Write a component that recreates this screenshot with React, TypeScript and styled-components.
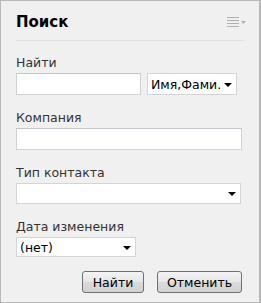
import React from "react";
import styled, { createGlobalStyle } from "styled-components";

const Global = createGlobalStyle`
  html, body { margin: 0; padding: 0; background: #ffffff; }
  * { box-sizing: border-box; }
`;

const Panel = styled.div`
  width: 261px;
  height: 303px;
  background: #f0f0f0;
  border: 1px solid #b8b8b8;
  border-right-width: 2px;
  padding: 0 15px 0 15px;
  display: flex;
  flex-direction: column;
  font-family: "DejaVu Sans", Verdana, sans-serif;
  font-size: 12px;
  color: #222;
`;

const Header = styled.div`
  height: 40px;
  display: flex;
  align-items: center;
  justify-content: space-between;
  border-bottom: 1px solid #e0e0e0;
  padding-top: 2px;
`;

const Title = styled.div`
  font-weight: bold;
  font-size: 15px;
  color: #000;
`;

const MenuIcon = styled.svg`
  width: 20px;
  height: 10px;
  margin-right: -3px;
`;

const Label = styled.div<{ $top: number }>`
  margin-top: ${(p) => p.$top}px;
  height: 16px;
  line-height: 16px;
  font-size: 12.5px;
  color: #333;
`;

const Row = styled.div`
  margin-top: 2px;
  display: flex;
  gap: 6px;
`;

const Input = styled.input<{ $w: number; $h: number }>`
  width: ${(p) => p.$w}px;
  height: ${(p) => p.$h}px;
  border: 1px solid #d0d0d6;
  border-top-color: #c4c4cc;
  background: #fff;
  margin: 0;
  padding: 0 3px;
  outline: none;
`;

const Select = styled.div<{ $w: number; $h: number }>`
  width: ${(p) => p.$w}px;
  height: ${(p) => p.$h}px;
  border: 1px solid #d4d4d8;
  background: #fff;
  display: flex;
  align-items: center;
  padding: 0 4px 0 3px;
  font-size: 12.5px;
  color: #000;
`;

const Arrow = styled.span`
  margin-left: auto;
  width: 0;
  height: 0;
  border-left: 4px solid transparent;
  border-right: 4px solid transparent;
  border-top: 4px solid #000;
  margin-top: 1px;
`;

const Buttons = styled.div`
  margin-top: 14px;
  display: flex;
  justify-content: flex-end;
  gap: 13px;
  padding-right: 2px;
`;

const Button = styled.button<{ $w: number }>`
  width: ${(p) => p.$w}px;
  height: 22px;
  border: 1px solid #707070;
  border-radius: 3px;
  background: linear-gradient(#f4f4f4, #e6e6e6 50%, #dadada 51%, #d2d2d2);
  font-family: "DejaVu Sans", Verdana, sans-serif;
  font-size: 12.5px;
  color: #000;
  padding: 0;
  margin: 0;
`;

export default function App() {
  return (
    <>
      <Global />
      <Panel>
        <Header>
          <Title>Поиск</Title>
          <MenuIcon viewBox="0 0 20 10">
            <g fill="#b0b0b0">
              <rect x="0" y="0" width="12" height="1" />
              <rect x="0" y="3" width="12" height="1" />
              <rect x="0" y="6" width="12" height="1" />
              <rect x="0" y="9" width="12" height="1" />
              <polygon points="14,4 19,4 16.5,7" />
            </g>
          </MenuIcon>
        </Header>
        <Label $top={14}>Найти</Label>
        <Row>
          <Input $w={125} $h={22} />
          <Select $w={90} $h={22}>
            Имя,Фами.
            <Arrow />
          </Select>
        </Row>
        <Label $top={15}>Компания</Label>
        <Row>
          <Input $w={226} $h={22} />
        </Row>
        <Label $top={15}>Тип контакта</Label>
        <Row>
          <Select $w={225} $h={21}>
            <Arrow />
          </Select>
        </Row>
        <Label $top={15}>Дата изменения</Label>
        <Row>
          <Select $w={120} $h={20}>
            (нет)
            <Arrow />
          </Select>
        </Row>
        <Buttons>
          <Button $w={62}>Найти</Button>
          <Button $w={85}>Отменить</Button>
        </Buttons>
      </Panel>
    </>
  );
}
